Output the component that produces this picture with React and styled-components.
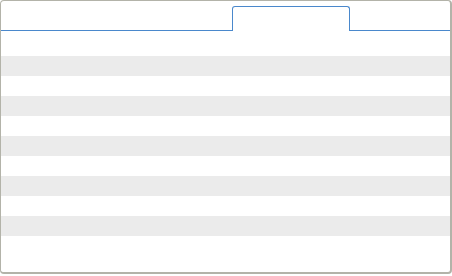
import styled, { createGlobalStyle } from 'styled-components';

const GlobalStyle = createGlobalStyle`
  html, body {
    margin: 0;
    padding: 0;
    background: #ffffff;
    font-family: "Liberation Sans", Arial, sans-serif;
  }
`;

// Window frame
const Frame = styled.div`
  box-sizing: border-box;
  width: 452px;
  height: 274px;
  border: 1px solid #b3b3a9;
  border-right-width: 2px;
  border-bottom-width: 2px;
  border-radius: 4px;
  background: #ffffff;
  overflow: hidden;
  display: flex;
  flex-direction: column;
`;

const TabBar = styled.div`
  display: flex;
  align-items: flex-end;
  height: 30px;
  flex-shrink: 0;
`;

const Rule = styled.div`
  box-sizing: border-box;
  height: 100%;
  border-bottom: 1px solid #4a88cc;
  width: ${(p) => (p.$width ? `${p.$width}px` : 'auto')};
  flex: ${(p) => (p.$width ? '0 0 auto' : '1')};
`;

const Tab = styled.div`
  box-sizing: border-box;
  width: 118px;
  height: 25px;
  border: 1px solid #4a88cc;
  border-bottom: none;
  border-radius: 3px 3px 0 0;
  background: #ffffff;
`;

const List = styled.div`
  padding-top: 5px;
  display: flex;
  flex-direction: column;
`;

const Row = styled.div`
  height: 20px;
  background: #ffffff;

  &:nth-child(even) {
    background: #ebebeb;
  }
`;

const rows = Array.from({ length: 11 }, (_, i) => i);

const App = () => {
  return (
    <>
      <GlobalStyle />
      <Frame>
        <TabBar>
          <Rule $width={231} />
          <Tab />
          <Rule />
        </TabBar>
        <List>
          {rows.map((i) => (
            <Row key={i} />
          ))}
        </List>
      </Frame>
    </>
  );
};

export default App;
